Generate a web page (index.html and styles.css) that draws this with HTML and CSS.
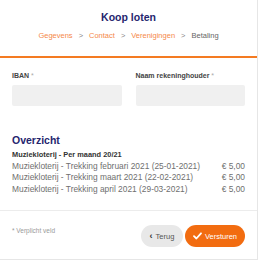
FILE: index.html
```html
<!DOCTYPE html>
<html lang="nl">
<head>
<meta charset="UTF-8">
<meta name="viewport" content="width=device-width, initial-scale=1.0">
<title>Koop loten</title>
<link rel="stylesheet" href="styles.css">
</head>
<body>
<div class="card">
    <div class="head">
        <h1 class="title">Koop loten</h1>
        <nav class="steps">
            <a>Gegevens</a><span class="sep">&gt;</span><a>Contact</a><span class="sep">&gt;</span><a>Verenigingen</a><span class="sep">&gt;</span><span class="current">Betaling</span>
        </nav>
    </div>
    <div class="body">
        <div class="fields">
            <div class="field">
                <label>IBAN <i>*</i></label>
                <input type="text">
            </div>
            <div class="field">
                <label>Naam rekeninghouder <i>*</i></label>
                <input type="text">
            </div>
        </div>
        <h2 class="overview">Overzicht</h2>
        <div class="group">Muziekloterij - Per maand 20/21</div>
        <ul class="rows">
            <li><span>Muziekloterij - Trekking februari 2021 (25-01-2021)</span><span>€ 5,00</span></li>
            <li><span>Muziekloterij - Trekking maart 2021 (22-02-2021)</span><span>€ 5,00</span></li>
            <li><span>Muziekloterij - Trekking april 2021 (29-03-2021)</span><span>€ 5,00</span></li>
        </ul>
    </div>
    <div class="foot">
        <span class="req">* Verplicht veld</span>
        <div class="btns">
            <a class="btn back"><b>&lsaquo;</b> Terug</a>
            <a class="btn send">
                <svg width="9" height="8" viewBox="0 0 9 8"><path d="M1 4.2 L3.4 6.5 L8 1.3" fill="none" stroke="#fff" stroke-width="1.8" stroke-linecap="round" stroke-linejoin="round"/></svg>
                Versturen
            </a>
        </div>
    </div>
</div>
</body>
</html>
```

FILE: styles.css
```css
body {
    margin: 0;
    background: #fff;
    font-family: "Liberation Sans", Arial, sans-serif;
}
ul {
    margin: 0;
    padding: 0;
    list-style: none;
}
.card {
    width: 257px;
    height: 259px;
    border-right: 1px solid #e6e6e6;
    border-bottom: 1px solid #e6e6e6;
    display: flex;
    flex-direction: column;
}
.head {
    padding: 10px 0 15px;
    border-bottom: 2px solid #f47b22;
    text-align: center;
}
.title {
    margin: 0;
    font-size: 10.5px;
    line-height: 14px;
    color: #25256e;
}
.steps {
    margin-top: 7px;
    font-size: 7.5px;
    line-height: 10px;
    color: #777;
}
.steps a {
    color: #f5894a;
}
.sep {
    margin: 0 6px;
    color: #888;
}
.current {
    color: #666;
}
.body {
    padding: 13px 12px 0;
    flex: 1;
}
.fields {
    display: flex;
    gap: 14px;
}
.field {
    flex: 1;
    display: flex;
    flex-direction: column;
    gap: 4px;
}
.field label {
    font-size: 7px;
    line-height: 10px;
    font-weight: bold;
    color: #444;
}
.field label i {
    font-style: normal;
    font-weight: normal;
    color: #aaa;
}
.field input {
    height: 21px;
    border: 0;
    border-radius: 2px;
    background: #f0f0f0;
    box-sizing: border-box;
    width: 100%;
}
.overview {
    margin: 27px 0 2px;
    font-size: 10.5px;
    line-height: 14px;
    color: #25256e;
}
.group {
    font-size: 7.4px;
    line-height: 11.7px;
    font-weight: bold;
    color: #333;
}
.rows li {
    display: flex;
    justify-content: space-between;
    font-size: 8.4px;
    line-height: 11.7px;
    color: #6f6f6f;
}
.foot {
    margin-top: 14px;
    border-top: 1px solid #ececec;
    padding: 14px 12px 12px;
    display: flex;
    justify-content: space-between;
    align-items: flex-start;
}
.req {
    margin-top: 2px;
    font-size: 6.5px;
    line-height: 8px;
    color: #999;
}
.btns {
    display: flex;
    gap: 2px;
}
.btn {
    height: 22px;
    border-radius: 11px;
    display: flex;
    align-items: center;
    justify-content: center;
    gap: 3px;
    font-size: 7.5px;
}
.back {
    width: 42px;
    background: #e8e8e8;
    color: #555;
}
.back b {
    font-size: 9px;
    color: #333;
}
.send {
    width: 60px;
    background: #f26c10;
    color: #fff;
}
```
